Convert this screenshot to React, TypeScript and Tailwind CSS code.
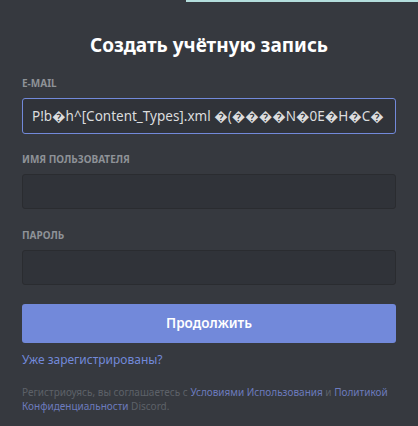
export default function App() {
  const font = { fontFamily: '"Noto Sans", "Open Sans", Arial, sans-serif' };

  return (
    <div className="w-[418px] h-[426px] bg-[#36393f] overflow-hidden" style={font}>
      <div className="flex h-[2px]">
        <div className="w-[186px]" />
        <div className="flex-1 bg-[#b4dedd]" />
      </div>

      <div className="px-[22px] pt-[30px]">
        <h1 className="text-center text-white text-[19px] font-bold leading-[26px]">
          Создать учётную запись
        </h1>

        <div className="mt-[18px] text-[10px] font-bold uppercase text-[#8e9297] leading-[14px]">
          E-mail
        </div>
        <div className="mt-[8px] h-[36px] rounded-[3px] border border-[#7289da] bg-[#303339] px-[9px] flex items-center text-[13.5px] text-[#dcddde] whitespace-nowrap overflow-hidden">
          P!b�h^[Content_Types].xml �(����N�0E�H�C�
        </div>

        <div className="mt-[18px] text-[10px] font-bold uppercase text-[#8e9297] leading-[14px]">
          Имя пользователя
        </div>
        <div className="mt-[8px] h-[35px] rounded-[3px] border border-[#2a2c30] bg-[#303339]" />

        <div className="mt-[19px] text-[10px] font-bold uppercase text-[#8e9297] leading-[14px]">
          Пароль
        </div>
        <div className="mt-[8px] h-[35px] rounded-[3px] border border-[#2a2c30] bg-[#303339]" />

        <button className="mt-[19px] w-full h-[39px] rounded-[3px] bg-[#7289da] text-white text-[13.5px] font-semibold">
          Продолжить
        </button>

        <div className="mt-[9px] text-[12px] text-[#7289da] leading-[16px]">Уже зарегистрированы?</div>

        <div className="mt-[17px] text-[10px] leading-[14px] text-[#5d6168]">
          <div>
            Регистриоуясь, вы соглашаетесь с{' '}
            <span className="text-[#6c7bbd]">Условиями Использования</span> и{' '}
            <span className="text-[#6c7bbd]">Политикой</span>
          </div>
          <div>
            <span className="text-[#6c7bbd]">Конфиденциальности</span> Discord.
          </div>
        </div>
      </div>
    </div>
  );
}
